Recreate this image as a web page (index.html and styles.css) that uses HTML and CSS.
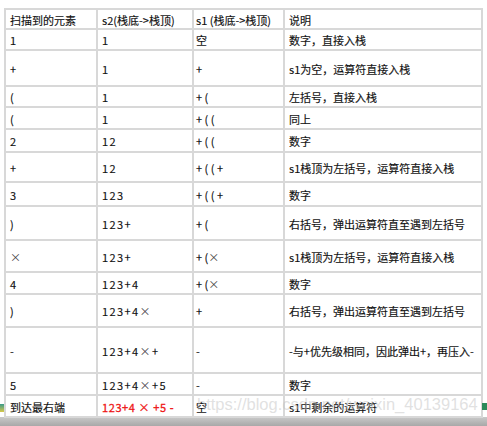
FILE: index.html
```html
<!DOCTYPE html>
<html lang="zh">
<head>
<meta charset="utf-8">
<link rel="stylesheet" href="styles.css">
</head>
<body>
<div class="page">
  <div class="sheet">
    <div class="grid">
      <div class="c">扫描到的元素</div><div class="c">s2(栈底-&gt;栈顶)</div><div class="c c3">s1 (栈底-&gt;栈顶)</div><div class="c">说明</div>
      <div class="c">1</div><div class="c num">1</div><div class="c c3">空</div><div class="c">数字，直接入栈</div>
      <div class="c">+</div><div class="c num">1</div><div class="c c3">+</div><div class="c">s1为空，运算符直接入栈</div>
      <div class="c">(</div><div class="c num">1</div><div class="c c3">+ (</div><div class="c">左括号，直接入栈</div>
      <div class="c">(</div><div class="c num">1</div><div class="c c3">+ ( (</div><div class="c">同上</div>
      <div class="c">2</div><div class="c num">12</div><div class="c c3">+ ( (</div><div class="c">数字</div>
      <div class="c">+</div><div class="c num">12</div><div class="c c3">+ ( ( +</div><div class="c">s1栈顶为左括号，运算符直接入栈</div>
      <div class="c">3</div><div class="c num">123</div><div class="c c3">+ ( ( +</div><div class="c">数字</div>
      <div class="c">)</div><div class="c num">123+</div><div class="c c3">+ (</div><div class="c">右括号，弹出运算符直至遇到左括号</div>
      <div class="c"><span class="x">×</span></div><div class="c num">123+</div><div class="c c3">+ ( <span class="x">×</span></div><div class="c">s1栈顶为左括号，运算符直接入栈</div>
      <div class="c">4</div><div class="c num">123+4</div><div class="c c3">+ ( <span class="x">×</span></div><div class="c">数字</div>
      <div class="c">)</div><div class="c num">123+4 <span class="x">×</span></div><div class="c c3">+</div><div class="c">右括号，弹出运算符直至遇到左括号</div>
      <div class="c">-</div><div class="c num">123+4 <span class="x">×</span> +</div><div class="c c3">-</div><div class="c">-与+优先级相同，因此弹出+，再压入-</div>
      <div class="c">5</div><div class="c num">123+4 <span class="x">×</span> +5</div><div class="c c3">-</div><div class="c">数字</div>
      <div class="c">到达最右端</div><div class="c num red">123+4 × +5 -</div><div class="c c3">空</div><div class="c">s1中剩余的运算符</div>
    </div>
    <div class="wm">https://blog.csdn.net/weixin_40139164</div>
    <div class="edge-l"></div>
    <div class="edge-r"></div>
  </div>
  <div class="bar"></div>
</div>
</body>
</html>
```

FILE: styles.css
```css
html, body {
  margin: 0;
  padding: 0;
  background: #ffffff;
}
.page {
  width: 487px;
  height: 426px;
  overflow: hidden;
  display: flex;
  flex-direction: column;
}
.sheet {
  position: relative;
  height: 417px;
  padding: 8px 0 0 4px;
  box-sizing: border-box;
  background: #fff;
}
.grid {
  display: grid;
  width: max-content;
  grid-template-columns: 92px 96px 91px 198px;
  grid-template-rows: 20px 21px 36px 21px 22px 23px 30px 24px 34px 32px 22px 33px 46px 22px 22px;
  border-left: 2px solid #d8d8d8;
  border-top: 2px solid #d8d8d8;
  font-family: "Noto Sans CJK SC", sans-serif;
  font-size: 11px;
  color: #111;
  -webkit-text-stroke: 0.15px #111;
}
.c {
  box-sizing: border-box;
  border-right: 2px solid #d8d8d8;
  border-bottom: 2px solid #d8d8d8;
  display: flex;
  align-items: center;
  padding: 2px 0 0 4px;
  white-space: nowrap;
  line-height: 1;
}
.c3 {
  padding-left: 2px;
}
.num {
  letter-spacing: 1.4px;
}
.x {
  color: #444;
  -webkit-text-stroke: 0;
}
.red {
  color: #ee1515;
  -webkit-text-stroke: 0.3px #ee1515;
  letter-spacing: 0.6px;
  font-weight: 400;
}
.wm {
  position: absolute;
  left: 197px;
  top: 396px;
  font-family: "Liberation Sans", Arial, sans-serif;
  font-size: 16.5px;
  line-height: 1;
  color: rgba(195, 195, 195, 0.5);
  white-space: nowrap;
  pointer-events: none;
}
.edge-l {
  position: absolute;
  left: 0;
  top: 404px;
  width: 4px;
  height: 8px;
  background: linear-gradient(#3a9a8a, #d8c84a);
}
.edge-r {
  position: absolute;
  left: 482px;
  top: 403px;
  width: 5px;
  height: 7px;
  background: #2a8a5a;
}
.bar {
  height: 9px;
  background: linear-gradient(#c9c9c9, #a8a8a8);
}
```
